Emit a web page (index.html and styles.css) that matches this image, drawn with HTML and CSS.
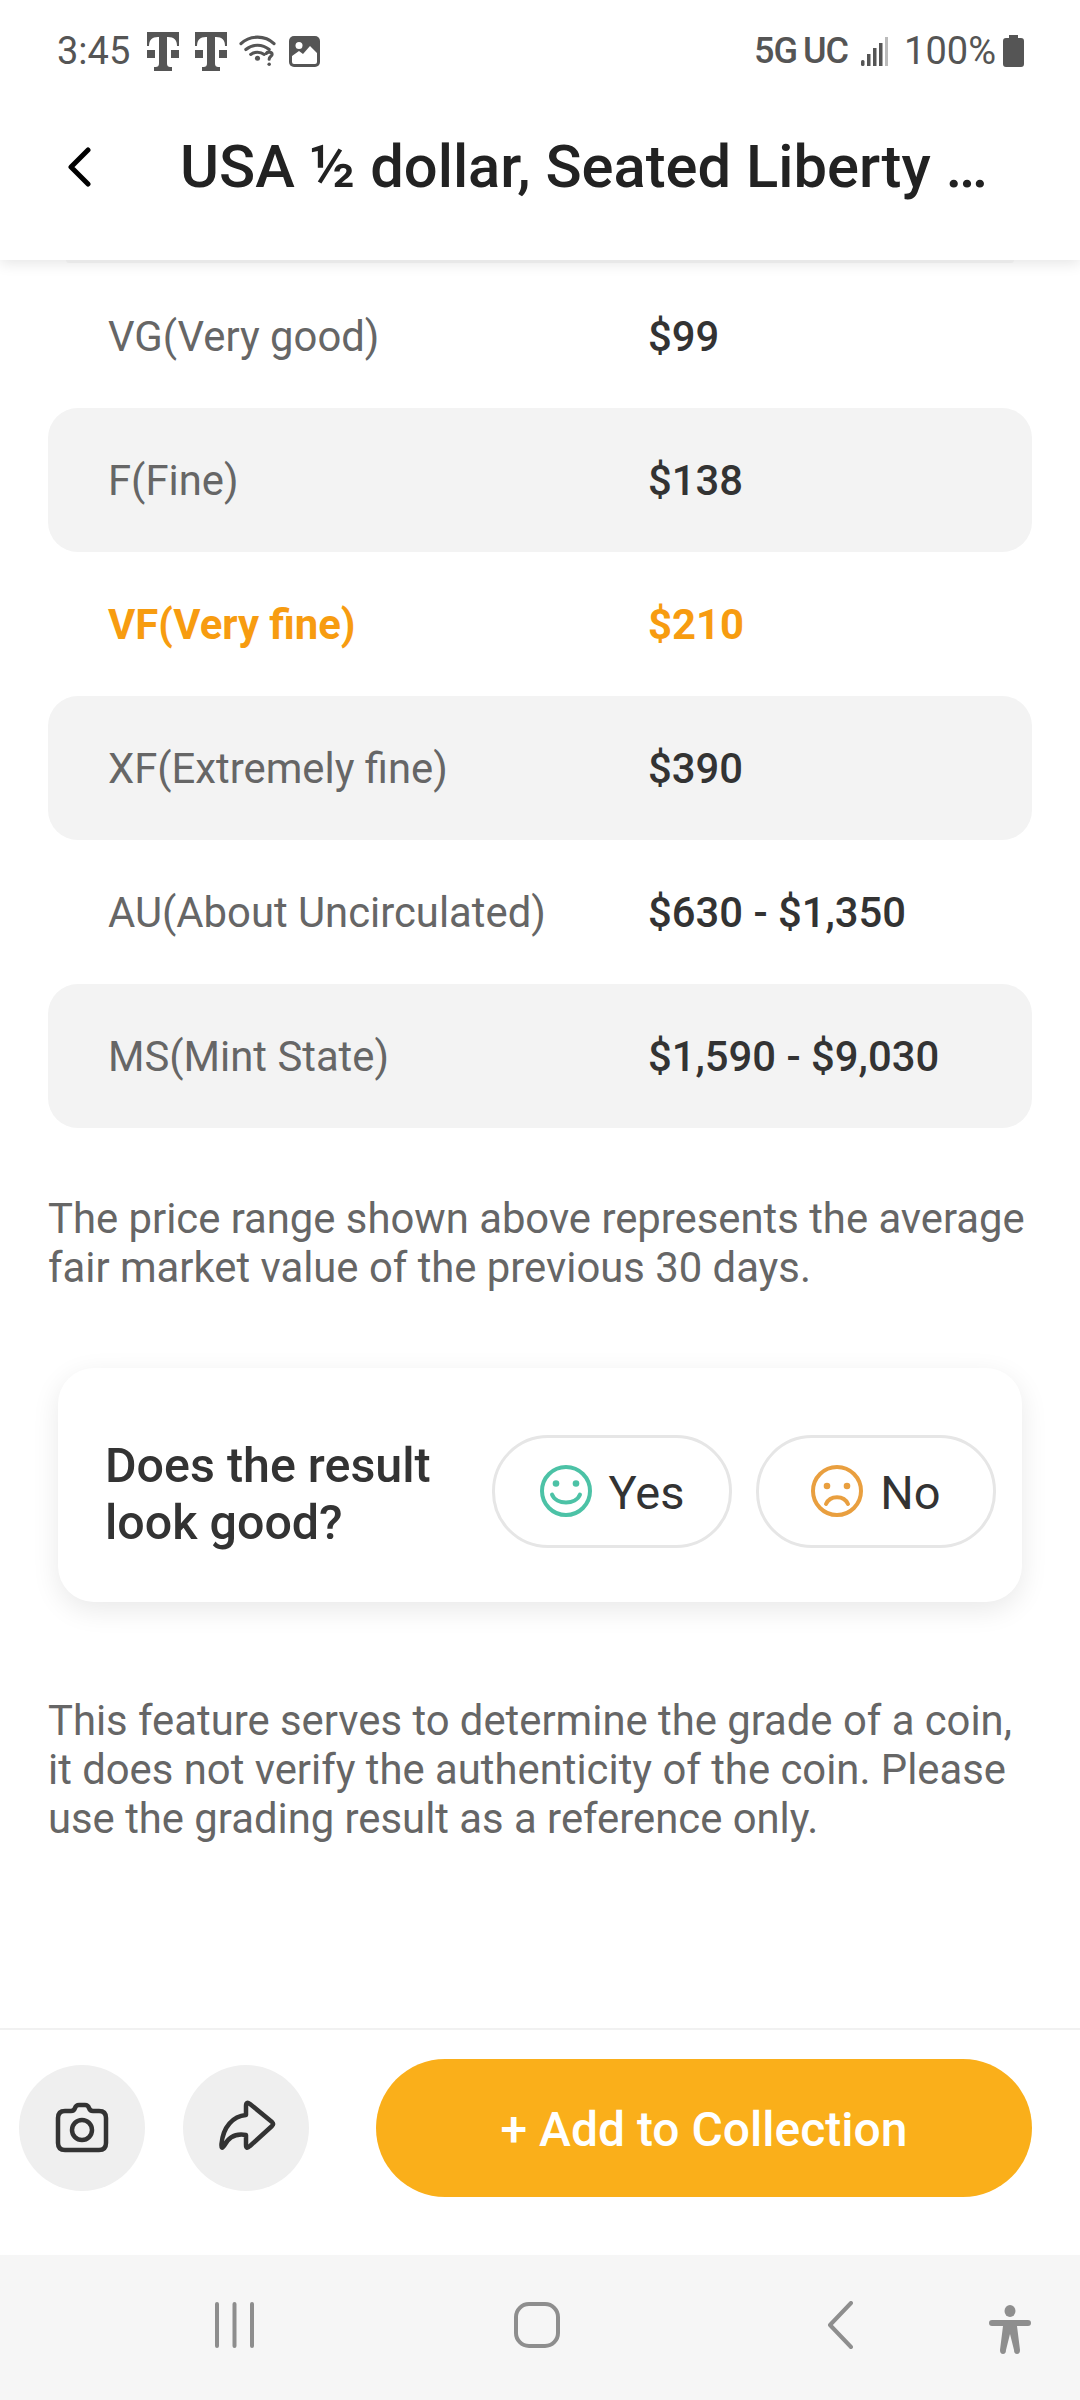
FILE: index.html
```html
<!DOCTYPE html>
<html lang="en">
<head>
    <meta charset="UTF-8">
    <meta name="viewport" content="width=device-width, initial-scale=1.0">
    <title>Coin grade</title>
    <link rel="stylesheet" href="styles.css">
</head>
<body>
<div class="phone">
    <!-- Android status bar -->
    <div class="status-bar">
        <div class="status-left">
            <span class="clock">3:45</span>
            <svg class="tm" viewBox="0 0 32 39"><path d="M0 0h32v14h-2c0-6-3-9-9-9h-1v26c0 3 1 4 4 4h1v4H7v-4h1c3 0 4-1 4-4V5h-1C5 5 2 8 2 14H0zM0 18h8v8H0zM24 18h8v8h-8z"/></svg>
            <svg class="tm" viewBox="0 0 32 39"><path d="M0 0h32v14h-2c0-6-3-9-9-9h-1v26c0 3 1 4 4 4h1v4H7v-4h1c3 0 4-1 4-4V5h-1C5 5 2 8 2 14H0zM0 18h8v8H0zM24 18h8v8h-8z"/></svg>
            <svg class="wifi" viewBox="0 0 38 36"><path class="wifi-arc" d="M2 10C11 1 27 1 36 10M7 16c7-6 17-6 24 0M12 21c4-3 10-3 14 0"/><circle class="wifi-dot" cx="19" cy="25" r="2.600"/><path class="wifi-q" d="M28 20c1-2 6-2 6 1 0 2-3 2-3 5"/><circle class="wifi-dot" cx="31" cy="31" r="1.800"/></svg>
            <svg class="pic" viewBox="0 0 31 31"><rect width="31" height="31" rx="5"/><path class="pic-in" d="M3 26v-6l7-5 4 3 7-8 7 7v9q0 2-2 2H5q-2 0-2-2z"/><circle class="pic-in" cx="10" cy="9.500" r="3.500"/></svg>
        </div>
        <div class="status-right">
            <span class="net net-5g">5G</span>
            <span class="net net-uc">UC</span>
            <svg class="signal" viewBox="0 0 27 29"><rect y="23" width="3.500" height="6" rx="1.500"/><rect x="6" y="17" width="3.500" height="12"/><rect x="12" y="11" width="3.500" height="18"/><rect x="18" y="6" width="3.500" height="23"/><rect class="signal-off" x="24" width="3" height="29"/></svg>
            <span class="battery-pct">100%</span>
            <svg class="battery" viewBox="0 0 21 32"><path d="M6 0h9v3h3q3 0 3 3v23q0 3-3 3H3q-3 0-3-3V6q0-3 3-3h3z"/></svg>
        </div>
    </div>

    <!-- Title bar -->
    <header class="title-bar">
        <svg class="back" viewBox="0 0 26 40"><path d="M22 3 5 20l17 17"/></svg>
        <h1>USA ½ dollar, Seated Liberty …</h1>
    </header>

    <main class="content">
        <div class="grade-table">
            <div class="grade-row"><span class="grade-name">VG(Very good)</span><span class="grade-price">$99</span></div>
            <div class="grade-row shaded"><span class="grade-name">F(Fine)</span><span class="grade-price">$138</span></div>
            <div class="grade-row current"><span class="grade-name">VF(Very fine)</span><span class="grade-price">$210</span></div>
            <div class="grade-row shaded"><span class="grade-name">XF(Extremely fine)</span><span class="grade-price">$390</span></div>
            <div class="grade-row"><span class="grade-name">AU(About Uncirculated)</span><span class="grade-price">$630 - $1,350</span></div>
            <div class="grade-row shaded"><span class="grade-name">MS(Mint State)</span><span class="grade-price">$1,590 - $9,030</span></div>
        </div>

        <p class="note note-price">The price range shown above represents the average fair market value of the previous 30 days.</p>

        <!-- Feedback card -->
        <div class="feedback">
            <div class="feedback-q">Does the result look good?</div>
            <div class="feedback-btn feedback-yes">
                <svg class="face" viewBox="0 0 52 52"><circle class="face-ring" cx="26" cy="26" r="24"/><circle cx="16" cy="18.500" r="3.300"/><circle cx="36" cy="18.500" r="3.300"/><path class="face-mouth" d="M12 29.500C16 40 36 40 40 29.500"/></svg>
                <span>Yes</span>
            </div>
            <div class="feedback-btn feedback-no">
                <svg class="face" viewBox="0 0 52 52"><circle class="face-ring" cx="26" cy="26" r="24"/><circle cx="16" cy="21" r="3.300"/><circle cx="36" cy="21" r="3.300"/><path class="face-mouth" d="M15 39C19 30 33 30 37 39"/></svg>
                <span>No</span>
            </div>
        </div>

        <p class="note note-grade">This feature serves to determine the grade of a coin, it does not verify the authenticity of the coin. Please use the grading result as a reference only.</p>
    </main>

    <!-- Bottom actions -->
    <div class="action-bar">
        <div class="round-btn">
            <svg viewBox="0 0 126 126"><path d="M46 46h6q3 0 4-3t4-3h6q3 0 4 3t4 3h6q7 0 7 7v25q0 7-7 7H46q-7 0-7-7V53q0-7 7-7z"/><circle cx="63" cy="65" r="10"/></svg>
        </div>
        <div class="round-btn">
            <svg viewBox="0 0 126 126"><path d="M63 41Q63 36 67 39L89 57Q91 59 89 61L67 81Q63 85 63 80V70C52 68 45 73 41 81Q38 85 38.500 79C40 62 50 51 63 50Z"/></svg>
        </div>
        <div class="add-btn">+ Add to Collection</div>
    </div>

    <!-- Android nav bar -->
    <nav class="nav-bar">
        <svg class="nav-recents" viewBox="0 0 39 46"><path d="M2 2v42M19.500 2v42M37 2v42"/></svg>
        <svg class="nav-home" viewBox="0 0 46 46"><rect x="2" y="2" width="42" height="42" rx="13"/></svg>
        <svg class="nav-back" viewBox="0 0 26 48"><path d="M24 2 3 24l21 22"/></svg>
        <svg class="nav-access" viewBox="0 0 42 50"><ellipse cx="21" cy="6" rx="5.500" ry="6"/><path d="M3 15h36q3 0 3 3t-3 3H28l3 24q0 4-3 4t-3-4l-4-16-4 16q0 4-3 4t-3-4l3-24H3q-3 0-3-3t3-3z"/></svg>
    </nav>
</div>
</body>
</html>
```

FILE: styles.css
```css
/* Page frame */
body {
    margin: 0;
    font-family: Roboto, "Noto Sans", sans-serif;
    background-color: white;
}

.phone {
    display: flex;
    flex-direction: column;
    width: 1080px;
    height: 2400px;
    overflow: hidden;
}

/* Status bar */
.status-bar {
    display: flex;
    justify-content: space-between;
    align-items: center;
    position: relative;
    z-index: 2;
    height: 100px;
    padding: 2px 56px 0 57px;
    box-sizing: border-box;
    background-color: white;
    color: #555;
    font-size: 38px;
    flex-shrink: 0;
}

.status-left, .status-right {
    display: flex;
    align-items: center;
}

.status-bar svg {
    fill: #555;
    display: block;
}

.clock { margin-right: 17px; }

.tm { width: 32px; height: 39px; margin-right: 16px; }

.wifi { width: 37px; height: 35px; margin: 0 13px 0 -4px; }

.status-bar .wifi-arc, .status-bar .wifi-q {
    fill: none;
    stroke: #555;
    stroke-width: 3.2;
    stroke-linecap: round;
}

.pic { width: 31px; height: 31px; }

.status-bar .pic-in { fill: white; }

.net { font-size: 36px; letter-spacing: -1px; }
.net-5g { font-weight: 500; margin-right: 6px; }
.net-uc { font-weight: 500; margin-right: 13px; }

.signal { width: 27px; height: 29px; margin-right: 16px; }
.status-bar .signal-off { fill: #bbb; }

.battery-pct { margin-right: 7px; }

.battery { width: 21px; height: 32px; }

/* Title bar */
.title-bar {
    display: flex;
    align-items: center;
    position: relative;
    z-index: 1;
    height: 160px;
    padding-left: 66px;
    padding-bottom: 26px;
    box-sizing: border-box;
    background-color: white;
    box-shadow: 0 3px 14px rgba(0, 0, 0, 0.11);
    flex-shrink: 0;
}

/* bottom edge of the row scrolled away under the bar */
.title-bar::after {
    content: "";
    position: absolute;
    left: 66px;
    right: 66px;
    bottom: -3px;
    height: 3px;
    border-radius: 0 0 10px 10px;
    background-color: #e8e8e8;
}

.back {
    width: 26px;
    height: 40px;
    margin-right: 88px;
    fill: none;
    stroke: black;
    stroke-width: 5;
    stroke-linecap: round;
    stroke-linejoin: round;
}

h1 {
    margin: 0;
    font-size: 59.700px;
    font-weight: 500;
    color: #222;
    white-space: nowrap;
}

/* Scroll area */
.content {
    flex: 1;
    padding: 4px 48px 0;
    overflow: hidden;
}

.grade-row {
    display: grid;
    grid-template-columns: 540px 1fr;
    align-items: center;
    height: 144px;
    padding-left: 60px;
    font-size: 41.800px;
    color: #666;
}

.grade-row.shaded {
    background-color: #f3f3f3;
    border-radius: 30px;
}

.grade-price {
    font-weight: 500;
    color: #333;
}

.grade-row.current .grade-name,
.grade-row.current .grade-price {
    font-weight: 700;
    color: #f79c10;
}

.note {
    margin: 0;
    font-size: 41.800px;
    line-height: 49px;
    color: #666;
}

.note-price { margin-top: 66px; }

.note-grade { margin-top: 94px; }

/* Feedback card */
.feedback {
    display: flex;
    align-items: center;
    height: 234px;
    margin: 76px 10px 0;
    padding: 12px 26px 0 47px;
    box-sizing: border-box;
    border-radius: 36px;
    background-color: white;
    box-shadow: 0 8px 28px rgba(0, 0, 0, 0.09);
}

.feedback-q {
    width: 387px;
    flex-shrink: 0;
    margin-top: 6px;
    font-size: 48.400px;
    font-weight: 500;
    line-height: 57px;
    color: #333;
}

.feedback-btn {
    display: flex;
    justify-content: center;
    align-items: center;
    gap: 17px;
    width: 240px;
    height: 113px;
    box-sizing: border-box;
    border: 3px solid #e6e6e6;
    border-radius: 56px;
    font-size: 47px;
    color: #333;
}

.feedback-btn span { padding-top: 2px; }

.feedback-no { margin-left: 24px; }

.face { width: 52px; height: 52px; }

.face-ring, .face-mouth {
    fill: none;
    stroke-width: 4;
    stroke-linecap: round;
}

.feedback-yes .face { fill: #4cc2a6; }
.feedback-yes .face-ring, .feedback-yes .face-mouth { fill: none; stroke: #4cc2a6; }
.feedback-no .face { fill: #e99f3f; }
.feedback-no .face-ring, .feedback-no .face-mouth { fill: none; stroke: #e99f3f; }

/* Bottom actions */
.action-bar {
    display: flex;
    align-items: center;
    height: 196px;
    padding: 0 48px 29px 19px;
    border-top: 2px solid #f1f1f1;
    flex-shrink: 0;
}

.round-btn {
    width: 126px;
    height: 126px;
    margin-right: 38px;
    border-radius: 50%;
    background-color: #efefef;
}

.round-btn svg {
    display: block;
    fill: none;
    stroke: #333;
    stroke-width: 4.500;
    stroke-linejoin: round;
}

.add-btn {
    flex: 1;
    margin-left: 29px;
    height: 138px;
    line-height: 142px;
    border-radius: 69px;
    background-color: #faaf1a;
    color: white;
    font-size: 48px;
    font-weight: 500;
    text-align: center;
}

/* Nav bar */
.nav-bar {
    display: grid;
    grid-template-columns: 299px 313px 162px 42px;
    align-items: center;
    height: 140px;
    padding: 0 0 5px 215px;
    background-color: #f6f6f6;
    flex-shrink: 0;
}

.nav-recents, .nav-home, .nav-back {
    fill: none;
    stroke: #8e8e8e;
    stroke-width: 4;
    stroke-linecap: round;
    stroke-linejoin: round;
}

.nav-recents { width: 39px; height: 46px; }
.nav-home { width: 46px; height: 46px; }
.nav-back { width: 26px; height: 48px; }
.nav-access { width: 42px; height: 50px; fill: #8e8e8e; margin-top: 10px; }
```
